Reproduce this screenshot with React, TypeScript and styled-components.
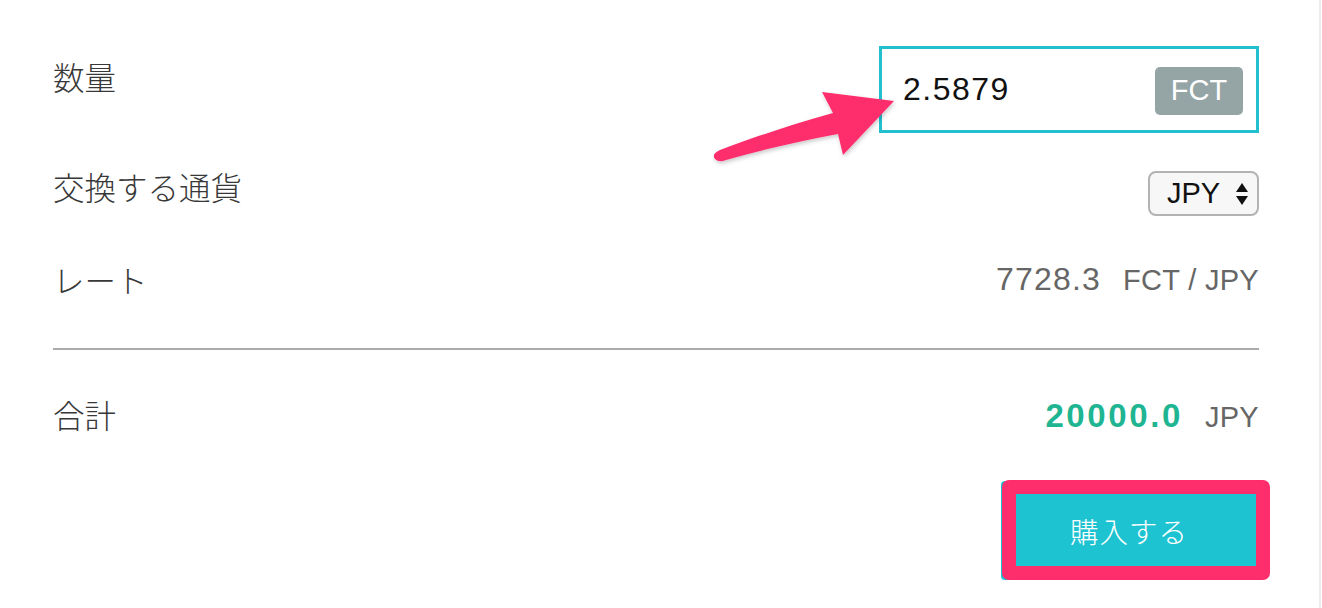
import styled, { createGlobalStyle } from "styled-components";

const GlobalStyle = createGlobalStyle`
  html, body {
    margin: 0;
    padding: 0;
    background: #ffffff;
  }
  * {
    box-sizing: border-box;
  }
`;

const JP_FONT = `"Noto Sans CJK JP", "Noto Sans", sans-serif`;
const NUM_FONT = `"Liberation Sans", Arial, "Noto Sans CJK JP", sans-serif`;

const Page = styled.div`
  position: relative;
  width: 1322px;
  height: 608px;
  overflow: hidden;
  background: #ffffff;
`;

const Panel = styled.div`
  width: 1321px;
  height: 608px;
  padding: 46px 60px 0 53px;
  border-right: 2px solid #ededed;
  display: flex;
  flex-direction: column;
`;

const Row = styled.div<{ $top?: number; $align?: string }>`
  display: flex;
  justify-content: space-between;
  align-items: ${(p) => p.$align ?? "center"};
  margin-top: ${(p) => p.$top ?? 0}px;
`;

const Label = styled.span<{ $offset?: number; $lh?: number }>`
  font-family: ${JP_FONT};
  font-size: 31.5px;
  font-weight: 300;
  line-height: ${(p) => p.$lh ?? 40}px;
  color: #383838;
  margin-top: ${(p) => p.$offset ?? 0}px;
`;

const AmountBox = styled.div`
  width: 380px;
  height: 87px;
  border: 3px solid #22bfcf;
  display: flex;
  align-items: center;
  justify-content: space-between;
  padding: 0 13px 0 21px;
`;

const AmountText = styled.span`
  font-family: ${NUM_FONT};
  font-size: 32px;
  letter-spacing: 1.5px;
  color: #111111;
`;

const UnitBadge = styled.span`
  width: 88px;
  height: 48px;
  border-radius: 5px;
  background: #95a5a6;
  color: #ffffff;
  font-family: ${NUM_FONT};
  font-size: 29px;
  display: inline-flex;
  align-items: center;
  justify-content: center;
  margin-top: 2px;
`;

const SelectBox = styled.div`
  width: 111px;
  height: 45px;
  border: 2px solid #b3b3b3;
  border-radius: 8px;
  background: #f7f7f7;
  display: flex;
  align-items: center;
  justify-content: space-between;
  padding: 0 8px 0 17px;
  font-family: ${NUM_FONT};
  font-size: 29px;
  color: #111111;
`;

const ValueGroup = styled.div`
  display: flex;
  align-items: baseline;
  gap: 22px;
`;

const RateValue = styled.span`
  font-family: ${NUM_FONT};
  font-size: 32px;
  letter-spacing: 1.2px;
  color: #666666;
`;

const UnitText = styled.span`
  font-family: ${NUM_FONT};
  font-size: 29px;
  letter-spacing: 0.3px;
  color: #666666;
`;

const TotalValue = styled.span`
  font-family: ${NUM_FONT};
  font-size: 33px;
  font-weight: 700;
  letter-spacing: 2.6px;
  color: #1fb592;
`;

const Divider = styled.div`
  height: 2px;
  background: #ababab;
  margin-top: 49px;
`;

const ActionRow = styled.div`
  display: flex;
  justify-content: flex-end;
  margin-top: 46px;
  padding-right: 2px;
`;

const ButtonWrap = styled.div`
  position: relative;
`;

const BuyButton = styled.button`
  width: 256px;
  height: 99px;
  border: none;
  border-radius: 4px;
  background: #1dc3d1;
  color: #ffffff;
  font-family: ${JP_FONT};
  font-size: 28.5px;
  font-weight: 300;
  letter-spacing: 1px;
  padding: 0;
  cursor: pointer;
`;

const HighlightFrame = styled.div`
  position: absolute;
  left: 1px;
  top: -1px;
  right: -13px;
  bottom: 0;
  border: 14px solid #fe2d6c;
  border-radius: 7px;
  pointer-events: none;
`;

const Annotation = styled.svg`
  position: absolute;
  left: 0;
  top: 0;
  pointer-events: none;
`;

function SelectArrows() {
  return (
    <svg width="14" height="24" viewBox="0 0 14 24" aria-hidden="true">
      <path d="M7 1 L13 10 L1 10 Z" fill="#111" />
      <path d="M1 14 L13 14 L7 23 Z" fill="#111" />
    </svg>
  );
}

function PointerArrow() {
  return (
    <Annotation width="1322" height="608" viewBox="0 0 1322 608">
      <defs>
        <filter id="arrowShadow" x="-10%" y="-10%" width="130%" height="140%">
          <feDropShadow dx="1" dy="2" stdDeviation="2" floodColor="#000" floodOpacity="0.22" />
        </filter>
      </defs>
      <path
        d="M894 101 L822 92 L833 113 C794 124 754 137 720 150 Q711 154 715 159 Q719 163 726 160 C764 149 801 141 838 134 L843 155 Z"
        fill="#fe2d6c"
        filter="url(#arrowShadow)"
      />
    </Annotation>
  );
}

export default function App() {
  return (
    <>
      <GlobalStyle />
      <Page>
        <Panel>
          <Row $align="flex-start">
            <Label $offset={10}>数量</Label>
            <AmountBox>
              <AmountText>2.5879</AmountText>
              <UnitBadge>FCT</UnitBadge>
            </AmountBox>
          </Row>

          <Row $top={38} $align="flex-start">
            <Label $offset={0} $lh={30}>
              交換する通貨
            </Label>
            <SelectBox>
              <span>JPY</span>
              <SelectArrows />
            </SelectBox>
          </Row>

          <Row $top={43}>
            <Label>レート</Label>
            <ValueGroup>
              <RateValue>7728.3</RateValue>
              <UnitText>FCT / JPY</UnitText>
            </ValueGroup>
          </Row>

          <Divider />

          <Row $top={47}>
            <Label $offset={-4}>合計</Label>
            <ValueGroup>
              <TotalValue>20000.0</TotalValue>
              <UnitText>JPY</UnitText>
            </ValueGroup>
          </Row>

          <ActionRow>
            <ButtonWrap>
              <BuyButton>購入する</BuyButton>
              <HighlightFrame />
            </ButtonWrap>
          </ActionRow>
        </Panel>
        <PointerArrow />
      </Page>
    </>
  );
}
